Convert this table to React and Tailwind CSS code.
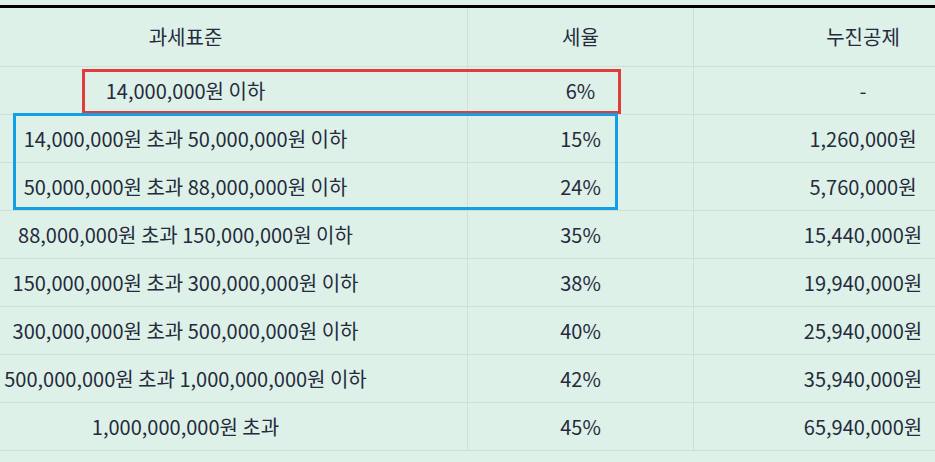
const ROWS = [
  ['14,000,000원 이하', '6%', '-'],
  ['14,000,000원 초과 50,000,000원 이하', '15%', '1,260,000원'],
  ['50,000,000원 초과 88,000,000원 이하', '24%', '5,760,000원'],
  ['88,000,000원 초과 150,000,000원 이하', '35%', '15,440,000원'],
  ['150,000,000원 초과 300,000,000원 이하', '38%', '19,940,000원'],
  ['300,000,000원 초과 500,000,000원 이하', '40%', '25,940,000원'],
  ['500,000,000원 초과 1,000,000,000원 이하', '42%', '35,940,000원'],
  ['1,000,000,000원 초과', '45%', '65,940,000원'],
]

const font = { fontFamily: '"Noto Sans CJK KR", "Noto Sans", sans-serif' }

function Row({ cells, header }) {
  return (
    <div
      className={`grid grid-cols-[564px_226px_338px] border-b border-[#d2ddd8] ${
        header ? 'h-[59px]' : 'h-[48px]'
      }`}
    >
      {cells.map((c, i) => (
        <div
          key={i}
          className={`flex items-center justify-center whitespace-nowrap ${
            i < 2 ? 'border-r border-[#d2ddd8]' : ''
          }`}
        >
          {c}
        </div>
      ))}
    </div>
  )
}

export default function App() {
  return (
    <div
      className="relative w-[935px] h-[462px] overflow-hidden bg-[#ddf1e8] pt-[5px] text-[20px] leading-none text-[#262a3c]"
      style={font}
    >
      <div className="-ml-[96px] w-[1128px] border-t-[3px] border-black">
        <Row header cells={['과세표준', '세율', '누진공제']} />
        {ROWS.map((r, i) => (
          <Row key={i} cells={r} />
        ))}
      </div>

      {/* highlight boxes */}
      <div className="absolute left-[82px] top-[69px] w-[539px] h-[45px] border-[3px] border-[#e23b3e]" />
      <div className="absolute left-[13px] top-[113px] w-[605px] h-[97px] border-[3px] border-[#129fe6]" />
    </div>
  )
}
